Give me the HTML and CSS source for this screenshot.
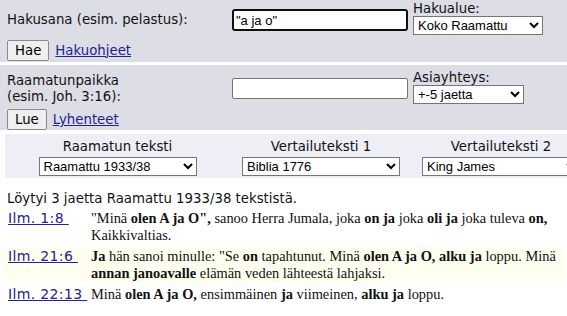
FILE: index.html
```html
<!DOCTYPE html>
<html lang="fi">
<head>
    <meta charset="UTF-8">
    <title>Raamattuhaku</title>
    <link rel="stylesheet" href="styles.css">
</head>
<body>
    <!-- hakulomake -->
    <form class="panel">
        <label class="label" for="haku">Hakusana (esim. pelastus):</label>
        <input class="field focused" id="haku" type="text" value="&quot;a ja o&quot;">
        <div class="pick">
            <span class="pick-title">Hakualue:</span>
            <select class="sel sel-wide">
                <option>Koko Raamattu</option>
            </select>
        </div>
        <div class="actions">
            <button type="button" class="btn">Hae</button>
            <a href="#">Hakuohjeet</a>
        </div>
    </form>

    <!-- raamatunpaikka -->
    <form class="panel panel-two">
        <label class="label" for="paikka">Raamatunpaikka<br>(esim. Joh. 3:16):</label>
        <input class="field" id="paikka" type="text">
        <div class="pick">
            <span class="pick-title">Asiayhteys:</span>
            <select class="sel sel-short">
                <option>+-5 jaetta</option>
            </select>
        </div>
        <div class="actions">
            <button type="button" class="btn">Lue</button>
            <a href="#">Lyhenteet</a>
        </div>
    </form>

    <!-- käännökset -->
    <div class="versions">
        <div class="ver ver-1">
            <span>Raamatun teksti</span>
            <select class="sel sel-ver"><option>Raamattu 1933/38</option></select>
        </div>
        <div class="ver ver-2">
            <span>Vertailuteksti 1</span>
            <select class="sel sel-ver"><option>Biblia 1776</option></select>
        </div>
        <div class="ver ver-3">
            <span>Vertailuteksti 2</span>
            <select class="sel sel-ver"><option>King James</option></select>
        </div>
    </div>

    <p class="found">Löytyi 3 jaetta Raamattu 1933/38 tekstistä.</p>

    <table class="results">
        <tr>
            <td class="ref"><a href="#">Ilm. 1:8 </a></td>
            <td class="verse">"Minä <b>olen A ja O",</b> sanoo Herra Jumala, joka <b>on ja</b> joka <b>oli ja</b> joka tuleva <b>on,</b> Kaikkivaltias.</td>
        </tr>
        <tr class="alt">
            <td class="ref"><a href="#">Ilm. 21:6 </a></td>
            <td class="verse"><b>Ja</b> hän sanoi minulle: "Se <b>on</b> tapahtunut. Minä <b>olen A ja O, alku ja</b> loppu. Minä <b>annan janoavalle</b> elämän veden lähteestä lahjaksi.</td>
        </tr>
        <tr>
            <td class="ref"><a href="#">Ilm. 22:13 </a></td>
            <td class="verse">Minä <b>olen A ja O,</b> ensimmäinen <b>ja</b> viimeinen, <b>alku ja</b> loppu.</td>
        </tr>
    </table>
</body>
</html>
```

FILE: styles.css
```css
*{
    margin: 0;
    padding: 0;
    box-sizing: border-box;
}
body{
    font-family: "DejaVu Sans", Verdana, sans-serif;
    font-size: 13.3px;
    color: #111;
    background-color: #fff;
    overflow: hidden;
}
a{
    color: #23238e;
}

/* hakupaneelit */
.panel{
    display: grid;
    grid-template-columns: 225px 181px auto;
    grid-template-rows: 36px auto;
    align-items: center;
    height: 62px;
    padding: 2px 0 0 7px;
    background-color: #dddde6;
}
.panel-two{
    margin-top: 3px;
    height: 65px;
    grid-template-rows: 40px auto;
    padding-top: 4px;
}
.label{
    line-height: 16px;
}
.field{
    width: 176px;
    height: 22px;
    border: 1px solid #767676;
    border-radius: 2px;
    font-family: "Liberation Sans", Arial, sans-serif;
    font-size: 13px;
    padding: 0 3px;
    background-color: #fff;
}
.panel-two .field{
    height: 21px;
    margin-top: -2px;
}
.focused{
    border: 2px solid #101010;
    border-radius: 3px;
    padding: 0 2px;
}
.pick{
    display: flex;
    flex-direction: column;
    align-items: flex-start;
    align-self: start;
}
.panel-two .pick{
    padding-top: 2px;
}
.pick-title{
    line-height: 14px;
}
.sel{
    height: 19px;
    font-family: "Liberation Sans", Arial, sans-serif;
    font-size: 13px;
    border: 1px solid #767676;
    border-radius: 0;
    background-color: #fff;
    color: #000;
}
.sel-wide{ width: 130px; }
.sel-short{ width: 111px; }
.actions{
    grid-column: 1 / 4;
    display: flex;
    align-items: center;
    gap: 6px;
}
.btn{
    font-family: "DejaVu Sans", Verdana, sans-serif;
    font-size: 13.3px;
    height: 21px;
    padding: 0 7px;
    border: 1px solid #8a8a8a;
    border-radius: 2px;
    background-color: #efefef;
    color: #000;
}

/* käännösvalinnat */
.versions{
    display: flex;
    margin: 4px 0 0 5px;
    height: 44px;
    padding-top: 5px;
    overflow: hidden;
    background-color: #eeeef6;
}
.ver{
    display: flex;
    flex-direction: column;
    align-items: center;
    flex-shrink: 0;
    gap: 3px;
}
.ver-1{ width: 225px; }
.ver-2{ width: 182px; }
.ver-3{ width: 178px; }
.sel-ver{ width: 158px; }

/* tulokset */
.found{
    margin: 13px 0 0 7px;
    line-height: 16px;
}
.results{
    border-collapse: separate;
    border-spacing: 2px;
    margin-left: 2px;
    width: 565px;
    table-layout: fixed;
}
.results td{
    vertical-align: top;
    padding: 1px 0 1px 4px;
}
.results td.ref{
    width: 85px;
    white-space: pre;
    padding-left: 4px;
}
.ref a{
    white-space: pre;
    font-size: 14px;
    letter-spacing: 0.35px;
}
.results td.verse{
    padding-left: 0;
    font-family: "Liberation Serif", "Times New Roman", serif;
    font-size: 14.4px;
    line-height: 17px;
}
.alt td{
    background-color: #fffff0;
}
```
